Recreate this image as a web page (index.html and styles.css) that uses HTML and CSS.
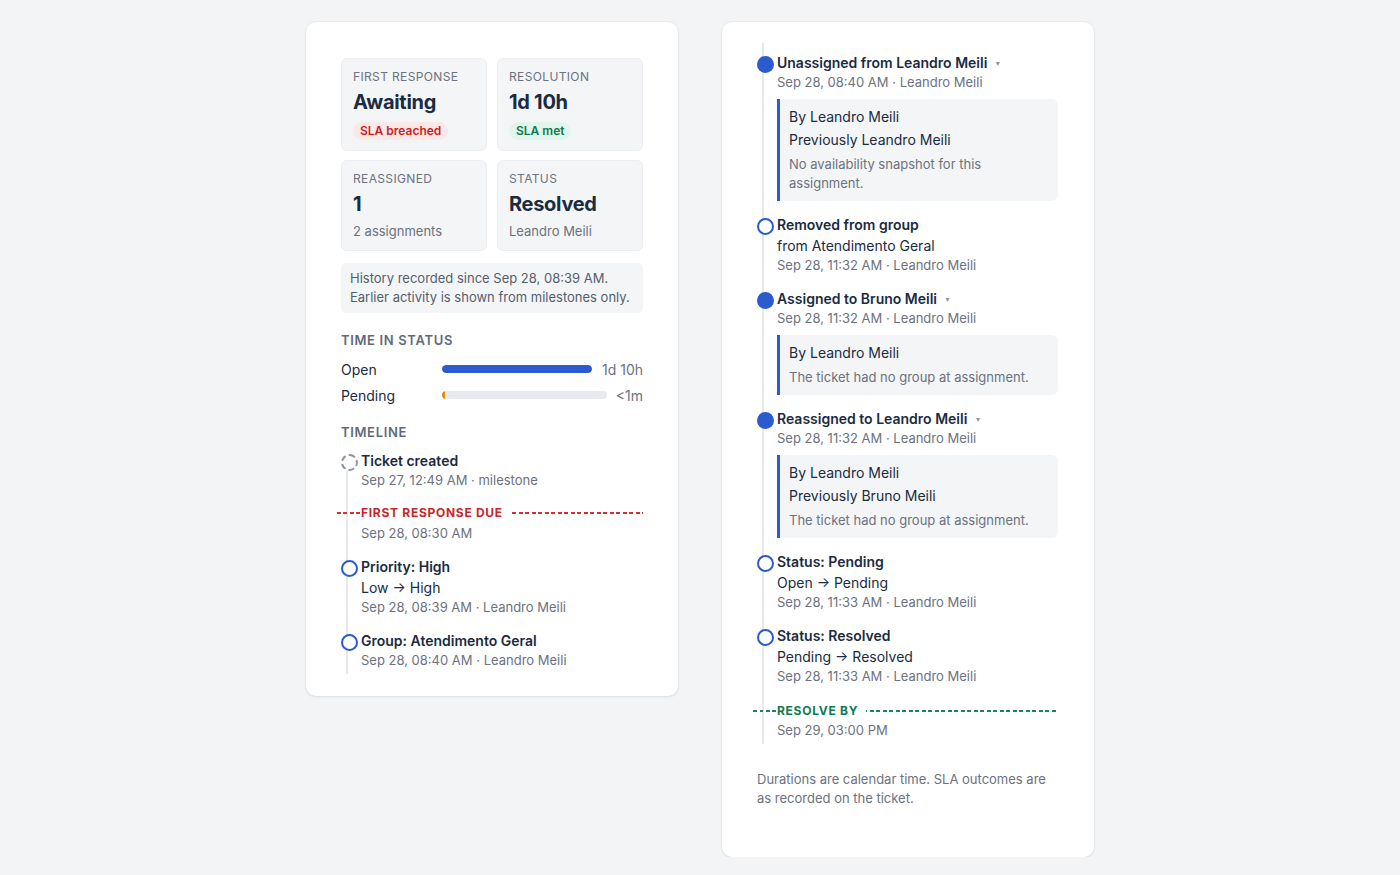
FILE: index.html
```html
<!DOCTYPE html>
<html lang="en">
<head>
<meta charset="utf-8">
<title>Ticket SLA history</title>
<link rel="stylesheet" href="styles.css">
</head>
<body>
<main class="page">
  <section class="card card--summary">
    <div class="stats">
      <div class="stat">
        <div class="stat-label">First response</div>
        <div class="stat-value">Awaiting</div>
        <span class="badge badge--bad">SLA breached</span>
      </div>
      <div class="stat">
        <div class="stat-label">Resolution</div>
        <div class="stat-value">1d 10h</div>
        <span class="badge badge--good">SLA met</span>
      </div>
      <div class="stat">
        <div class="stat-label">Reassigned</div>
        <div class="stat-value">1</div>
        <div class="stat-sub">2 assignments</div>
      </div>
      <div class="stat">
        <div class="stat-label">Status</div>
        <div class="stat-value">Resolved</div>
        <div class="stat-sub">Leandro Meili</div>
      </div>
    </div>

    <div class="notice">History recorded since Sep 28, 08:39 AM.<br>Earlier activity is shown from milestones only.</div>

    <h3 class="section-title">Time in status</h3>
    <div class="tis">
      <div class="tis-row">
        <span class="tis-label">Open</span>
        <span class="tis-track"><span class="tis-fill tis-fill--open" style="width:100%"></span></span>
        <span class="tis-value">1d 10h</span>
      </div>
      <div class="tis-row">
        <span class="tis-label">Pending</span>
        <span class="tis-track"><span class="tis-fill tis-fill--pending" style="width:2%"></span></span>
        <span class="tis-value tis-value--short">&lt;1m</span>
      </div>
    </div>

    <h3 class="section-title section-title--timeline">Timeline</h3>
    <div class="timeline timeline--start">
      <div class="tl-item">
        <span class="dot dot--dashed"></span>
        <div class="tl-body">
          <div class="tl-title">Ticket created</div>
          <div class="tl-meta">Sep 27, 12:49 AM · milestone</div>
        </div>
      </div>
      <div class="tl-marker tl-marker--red">
        <div class="marker-line"><span class="marker-label">First response due</span></div>
        <div class="marker-date">Sep 28, 08:30 AM</div>
      </div>
      <div class="tl-item">
        <span class="dot dot--hollow"></span>
        <div class="tl-body">
          <div class="tl-title">Priority: High</div>
          <div class="tl-sub">Low → High</div>
          <div class="tl-meta">Sep 28, 08:39 AM · Leandro Meili</div>
        </div>
      </div>
      <div class="tl-item">
        <span class="dot dot--hollow"></span>
        <div class="tl-body">
          <div class="tl-title">Group: Atendimento Geral</div>
          <div class="tl-meta">Sep 28, 08:40 AM · Leandro Meili</div>
        </div>
      </div>
    </div>
  </section>

  <section class="card card--timeline">
    <div class="timeline timeline--cont">
      <div class="tl-item">
        <span class="dot dot--filled"></span>
        <div class="tl-body">
          <div class="tl-title">Unassigned from Leandro Meili <span class="caret">▾</span></div>
          <div class="tl-meta">Sep 28, 08:40 AM · Leandro Meili</div>
          <div class="tl-detail">
            <div class="detail-line">By Leandro Meili</div>
            <div class="detail-line">Previously Leandro Meili</div>
            <div class="detail-note">No availability snapshot for this assignment.</div>
          </div>
        </div>
      </div>
      <div class="tl-item">
        <span class="dot dot--hollow"></span>
        <div class="tl-body">
          <div class="tl-title">Removed from group</div>
          <div class="tl-sub">from Atendimento Geral</div>
          <div class="tl-meta">Sep 28, 11:32 AM · Leandro Meili</div>
        </div>
      </div>
      <div class="tl-item">
        <span class="dot dot--filled"></span>
        <div class="tl-body">
          <div class="tl-title">Assigned to Bruno Meili <span class="caret">▾</span></div>
          <div class="tl-meta">Sep 28, 11:32 AM · Leandro Meili</div>
          <div class="tl-detail">
            <div class="detail-line">By Leandro Meili</div>
            <div class="detail-note">The ticket had no group at assignment.</div>
          </div>
        </div>
      </div>
      <div class="tl-item">
        <span class="dot dot--filled"></span>
        <div class="tl-body">
          <div class="tl-title">Reassigned to Leandro Meili <span class="caret">▾</span></div>
          <div class="tl-meta">Sep 28, 11:32 AM · Leandro Meili</div>
          <div class="tl-detail">
            <div class="detail-line">By Leandro Meili</div>
            <div class="detail-line">Previously Bruno Meili</div>
            <div class="detail-note">The ticket had no group at assignment.</div>
          </div>
        </div>
      </div>
      <div class="tl-item">
        <span class="dot dot--hollow"></span>
        <div class="tl-body">
          <div class="tl-title">Status: Pending</div>
          <div class="tl-sub">Open → Pending</div>
          <div class="tl-meta">Sep 28, 11:33 AM · Leandro Meili</div>
        </div>
      </div>
      <div class="tl-item">
        <span class="dot dot--hollow"></span>
        <div class="tl-body">
          <div class="tl-title">Status: Resolved</div>
          <div class="tl-sub">Pending → Resolved</div>
          <div class="tl-meta">Sep 28, 11:33 AM · Leandro Meili</div>
        </div>
      </div>
      <div class="tl-marker tl-marker--green">
        <div class="marker-line"><span class="marker-label">Resolve by</span></div>
        <div class="marker-date">Sep 29, 03:00 PM</div>
      </div>
    </div>
    <p class="footnote">Durations are calendar time. SLA outcomes are as recorded on the ticket.</p>
  </section>
</main>
</body>
</html>
```

FILE: styles.css
```css
* { box-sizing: border-box; }

html, body {
  margin: 0;
  padding: 0;
  background: #f3f4f6;
  font-family: Inter, "Noto Sans", "DejaVu Sans", sans-serif;
  color: #1a2b42;
}

.page {
  display: flex;
  justify-content: center;
  align-items: flex-start;
  gap: 44px;
  padding-top: 22px;
}

.card {
  width: 372px;
  background: #fff;
  border-radius: 10px;
  box-shadow: 0 1px 3px rgba(20, 30, 50, 0.07), 0 0 0 1px rgba(20, 30, 50, 0.03);
}

.card--summary { padding: 36px 35px 22px; }
.card--timeline { padding: 21px 36px 49px 35px; }

/* stats */
.stats {
  display: grid;
  grid-template-columns: 1fr 1fr;
  gap: 9px 10px;
}

.stat {
  background: #f4f5f7;
  border: 1px solid #eceef1;
  border-radius: 6px;
  padding: 10px 11px 10px;
}

.stat-label {
  font-size: 12px;
  line-height: 16px;
  letter-spacing: 0.03em;
  text-transform: uppercase;
  color: #6b7280;
}

.stat-value {
  margin-top: 3px;
  font-size: 20px;
  line-height: 28px;
  font-weight: 700;
  color: #1a2b42;
  letter-spacing: -0.015em;
}

.stat-sub {
  margin-top: 5px;
  font-size: 13px;
  line-height: 17px;
  color: #6b7280;
}

.badge {
  display: inline-block;
  margin-top: 6px;
  padding: 0 7px;
  height: 18px;
  line-height: 18px;
  border-radius: 9px;
  font-size: 12px;
  font-weight: 600;
}
.badge--bad { background: #fde8e8; color: #c81e1e; }
.badge--good { background: #e2f5ec; color: #0c7a4c; }

.notice {
  margin-top: 12px;
  background: #f4f5f7;
  border-radius: 5px;
  padding: 6px 9px;
  font-size: 13px;
  line-height: 19px;
  color: #545f6e;
}

.section-title {
  margin: 19px 0 11px;
  font-size: 13px;
  line-height: 16px;
  font-weight: 600;
  letter-spacing: 0.05em;
  text-transform: uppercase;
  color: #5f6b7a;
}

/* time in status */
.tis { display: flex; flex-direction: column; gap: 6px; }
.tis-row { display: flex; align-items: center; height: 20px; }
.tis-label { width: 101px; font-size: 14px; color: #1a2b42; }
.tis-track {
  flex: 1;
  height: 8px;
  border-radius: 4px;
  background: #e7eaee;
  overflow: hidden;
  display: flex;
}
.tis-fill { height: 100%; border-radius: 4px; }
.tis-fill--open { background: #2c5bcf; }
.tis-fill--pending { background: #e58a0c; border-radius: 4px 0 0 4px; }
.tis-value { margin-left: 10px; font-size: 14px; color: #6b7280; }
.tis-value--short { margin-left: 9px; }

/* timeline */
.timeline {
  position: relative;
  display: flex;
  flex-direction: column;
  gap: 14px;
  padding-bottom: 4px;
}
.timeline::before {
  content: "";
  position: absolute;
  left: 5px;
  top: 0;
  bottom: 0;
  width: 2px;
  background: #e6e8ec;
}
.timeline--start::before { top: 10px; }
.timeline--cont { padding-top: 10px; }

.tl-item {
  position: relative;
  display: grid;
  grid-template-columns: 20px 1fr;
}

.dot {
  width: 17px;
  height: 17px;
  margin-top: 3px;
  border-radius: 50%;
  background: #fff;
  position: relative;
  z-index: 1;
}
.dot--filled { background: #2c5bcf; }
.dot--hollow { border: 2px solid #2c5bcf; }
.dot--dashed { border: 2px dashed #8b94a1; }

.tl-title {
  font-size: 14px;
  line-height: 20px;
  font-weight: 600;
  color: #1a2b42;
}
.caret {
  display: inline-block;
  margin-left: 5px;
  font-size: 8px;
  color: #8b94a1;
  vertical-align: 2px;
}
.tl-sub {
  font-size: 14px;
  line-height: 21px;
  color: #1a2b42;
}
.tl-meta {
  font-size: 13px;
  line-height: 19px;
  color: #6b7280;
}

.tl-detail {
  margin-top: 7px;
  background: #f4f5f7;
  border-left: 3px solid #2c5bcf;
  border-radius: 0 6px 6px 0;
  padding: 8px 9px 8px 9px;
}
.detail-line {
  font-size: 14px;
  line-height: 20px;
  color: #1a2b42;
}
.detail-line + .detail-line { margin-top: 3px; }
.detail-note {
  margin-top: 5px;
  font-size: 13px;
  line-height: 19px;
  color: #6b7280;
}

/* SLA markers */
.tl-marker { margin-top: 1px; }
.tl-marker--green { margin-top: 3px; }
.marker-line {
  position: relative;
  display: flex;
  align-items: center;
  height: 16px;
  margin-left: -4px;
}
.marker-line::before {
  content: "";
  position: absolute;
  left: 0;
  right: 0;
  top: 7px;
  height: 2px;
}
.marker-label {
  position: relative;
  margin-left: 24px;
  padding-right: 8px;
  background: #fff;
  font-size: 12px;
  line-height: 16px;
  font-weight: 700;
  letter-spacing: 0.06em;
  text-transform: uppercase;
}
.tl-marker--red .marker-line::before {
  background: repeating-linear-gradient(90deg, #d0312d 0 4px, transparent 4px 6.5px);
}
.tl-marker--red .marker-label { color: #c8252a; }
.tl-marker--green .marker-line::before {
  background: repeating-linear-gradient(90deg, #14875c 0 4px, transparent 4px 6.5px);
}
.tl-marker--green .marker-label { color: #0f7a52; }
.marker-date {
  margin-top: 3px;
  padding-left: 20px;
  font-size: 13px;
  line-height: 19px;
  color: #6b7280;
}
.tl-marker--green .marker-date { margin-top: 2px; }

.footnote {
  margin: 26px 0 0;
  font-size: 13px;
  line-height: 19px;
  color: #6b7280;
}
```
